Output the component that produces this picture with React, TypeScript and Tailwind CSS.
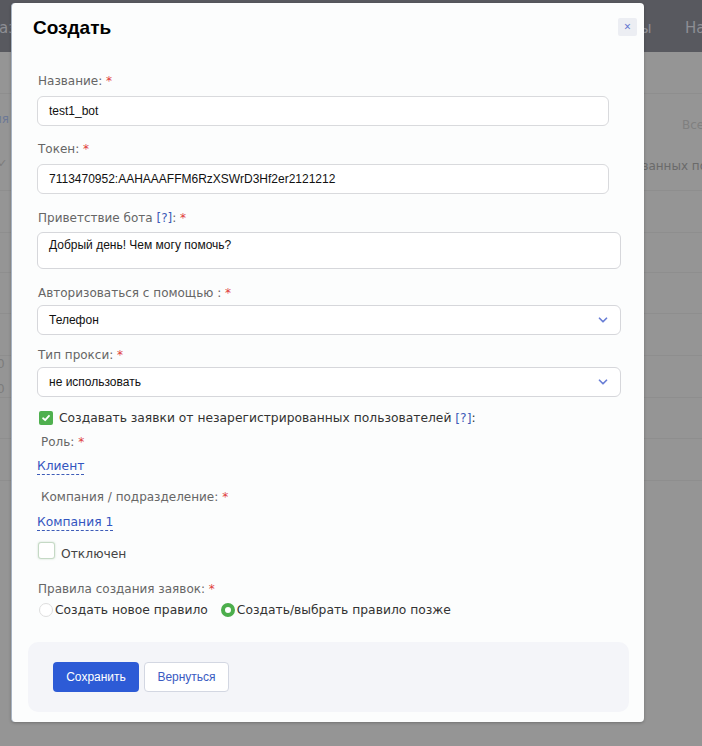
import { ChevronDown } from 'lucide-react'

const labelFont = "font-['DejaVu_Sans',sans-serif]"
const fieldFont = "font-['Liberation_Sans',Arial,sans-serif]"

function Label({ text, hint, className = '' }: { text: string; hint?: boolean; className?: string }) {
  return (
    <div className={`${labelFont} text-[12px] leading-5 text-[#666] ${className}`}>
      {text}
      {hint && <span className="text-[#3d5cb8]"> [?]</span>}
      {hint ? ':' : ''} <span className="text-[#e03c3c]">*</span>
    </div>
  )
}

function TextField({ value }: { value: string }) {
  return (
    <div
      className={`${fieldFont} h-[30px] w-[572px] rounded-md border border-[#d9dadd] bg-white px-[11px] text-[12px] leading-[28px] text-[#111]`}
    >
      {value}
    </div>
  )
}

function SelectField({ value }: { value: string }) {
  return (
    <div
      className={`${fieldFont} flex h-[30px] w-[584px] items-center justify-between rounded-md border border-[#d6d7db] bg-white pl-[11px] pr-[10px] text-[12px] text-[#111]`}
    >
      <span>{value}</span>
      <ChevronDown className="h-[14px] w-[14px] text-[#6a7fd6]" strokeWidth={3} />
    </div>
  )
}

function DashedLink({ text }: { text: string }) {
  return (
    <span className={`${labelFont} border-b border-dashed border-[#3d5cb8] pb-[1px] text-[12.3px] leading-5 text-[#3355c0]`}>
      {text}
    </span>
  )
}

// dimmed page behind the dialog
function Backdrop() {
  const rows = [93, 190, 232, 272, 313, 355, 397, 438, 480]
  return (
    <div className="absolute inset-0 bg-[#959595]">
      <div className="relative h-[52px] bg-[#58595f]">
        <span className={`${labelFont} absolute left-[-10px] top-[17px] whitespace-nowrap text-[15px] text-[#8d8e94]`}>Раз</span>
        <span className={`${labelFont} absolute left-[630px] top-[17px] whitespace-nowrap text-[15px] text-[#8d8e94]`}>ны</span>
        <span className={`${labelFont} absolute left-[685px] top-[17px] whitespace-nowrap text-[15px] text-[#8d8e94]`}>На</span>
      </div>
      {rows.map((y) => (
        <div key={y} className="absolute left-0 right-0 h-px bg-[#8e8e8e]" style={{ top: y }} />
      ))}
      <span className={`${labelFont} absolute left-[-6px] top-[110px] whitespace-nowrap text-[12px] text-[#6c7896]`}>ия</span>
      <span className={`${labelFont} absolute left-[-2px] top-[156px] text-[11px] text-[#7c7c7c]`}>✓</span>
      <span className={`${labelFont} absolute left-[-3px] top-[355px] text-[12px] text-[#7c7c7c]`}>0</span>
      <span className={`${labelFont} absolute left-[-3px] top-[380px] text-[12px] text-[#7c7c7c]`}>0</span>
      <span className={`${labelFont} absolute left-[682px] top-[116px] whitespace-nowrap text-[12px] text-[#808080]`}>Все</span>
      <span className={`${labelFont} absolute left-[642px] top-[157px] whitespace-nowrap text-[12px] text-[#6a6a6a]`}>занных пол</span>
    </div>
  )
}

export default function App() {
  return (
    <div className="relative h-[746px] w-[702px] overflow-hidden">
      <Backdrop />
      <div className="absolute left-[11px] top-[3px] flex h-[719px] w-[633px] flex-col rounded-[4px] border-l border-[#a7b3c2] bg-[#fcfdfd] shadow-[0_1px_3px_rgba(0,0,0,0.25)]">
        <div className="relative flex h-[50px] items-center pl-[21px] pt-[1px]">
          <h1 className={`${fieldFont} text-[19px] font-bold text-black`}>Создать</h1>
          <button className="absolute right-[7px] top-[15px] flex h-[18px] w-[19px] items-center justify-center rounded-[2px] bg-[#eceef3] text-[12px] leading-none text-[#6576d0]">
            ×
          </button>
        </div>

        <div className="flex flex-col pl-[25px]">
          <Label text="Название:" className="mt-[18px] pl-[1px]" />
          <div className="mt-[5px]">
            <TextField value="test1_bot" />
          </div>

          <Label text="Токен:" className="mt-[13px] pl-[1px]" />
          <div className="mt-[5px]">
            <TextField value="7113470952:AAHAAAFFM6RzXSWrD3Hf2er2121212" />
          </div>

          <Label text="Приветствие бота" hint className="mt-[14px] pl-[1px]" />
          <div
            className={`${fieldFont} mt-[4px] h-[37px] w-[584px] rounded-md border border-[#d6d7db] bg-white px-[11px] pt-[4px] text-[12px] leading-4 text-[#111]`}
          >
            Добрый день! Чем могу помочь?
          </div>

          <Label text="Авторизоваться с помощью :" className="mt-[14px] pl-[1px]" />
          <div className="mt-[2px]">
            <SelectField value="Телефон" />
          </div>

          <Label text="Тип прокси:" className="mt-[10px] pl-[1px]" />
          <div className="mt-[2px]">
            <SelectField value="не использовать" />
          </div>

          <div className="mt-[11px] flex items-center">
            <span className="ml-[2px] flex h-[14px] w-[14px] items-center justify-center rounded-[2px] bg-[#4fb04f]">
              <svg viewBox="0 0 12 12" className="h-[10px] w-[10px]" fill="none" stroke="white" strokeWidth="2.2" strokeLinecap="round" strokeLinejoin="round">
                <path d="M2.5 6.3 5 8.6 9.6 3.4" />
              </svg>
            </span>
            <span className={`${labelFont} ml-[6px] text-[12.3px] leading-5 text-[#333]`}>
              Создавать заявки от незарегистрированных пользователей <span className="text-[#3d5cb8]">[?]</span>:
            </span>
          </div>

          <Label text="Роль:" className="mt-[4px] pl-[4px]" />
          <div className="mt-0 h-5">
            <DashedLink text="Клиент" />
          </div>

          <Label text="Компания / подразделение:" className="mt-[15px] pl-[4px]" />
          <div className="mt-[1px] h-5">
            <DashedLink text="Компания 1" />
          </div>

          <div className="mt-[14px] flex items-start">
            <span className="ml-[1px] h-[17px] w-[17px] rounded-[3px] border border-[#c5d9c5] bg-white shadow-[0_0_2px_rgba(90,150,90,0.35)]" />
            <span className={`${labelFont} ml-[6px] mt-[2px] text-[12.3px] leading-5 text-[#444]`}>Отключен</span>
          </div>

          <Label text="Правила создания заявок:" className="mt-[15px] pl-[1px]" />
          <div className={`${labelFont} mt-[1px] flex items-center text-[12.3px] leading-5 text-[#333]`}>
            <span className="ml-[2px] h-[14px] w-[14px] rounded-full border border-[#dedede] bg-white" />
            <span className="ml-[2px]">Создать новое правило</span>
            <span className="ml-[13px] h-[14px] w-[14px] rounded-full border-[4px] border-[#4cae4c] bg-white" />
            <span className="ml-[2px]">Создать/выбрать правило позже</span>
          </div>
        </div>

        <div className="ml-[16px] mt-[22px] flex h-[70px] w-[601px] items-center gap-[5px] rounded-[10px] bg-[#f4f5f9] pl-[25px]">
          <button className={`${fieldFont} h-[30px] w-[86px] rounded-[4px] bg-[#2d5bd6] text-[12px] text-white`}>
            Сохранить
          </button>
          <button className={`${fieldFont} h-[30px] w-[85px] rounded-[4px] border border-[#d3d7e2] bg-white text-[12px] text-[#3a5bc2]`}>
            Вернуться
          </button>
        </div>
      </div>
    </div>
  )
}
